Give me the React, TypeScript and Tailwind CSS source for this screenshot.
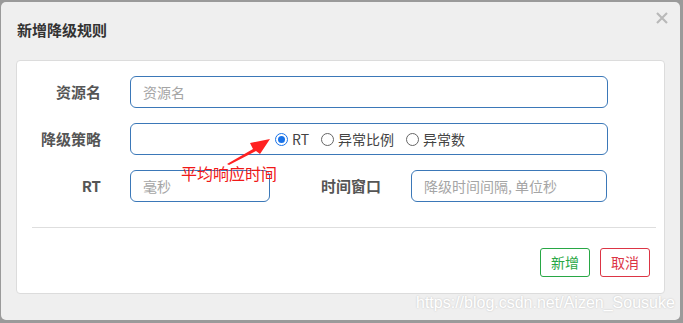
const FONT = "font-['Microsoft_YaHei','Noto_Sans_CJK_SC',sans-serif]";

function Field({ placeholder, className }: { placeholder: string; className: string }) {
  return (
    <div
      className={`h-[32px] rounded-[6px] border border-[#3b78b8] bg-white pl-[12px] flex items-center text-[14px] text-[#a5a5a5] ${className}`}
    >
      {placeholder}
    </div>
  );
}

function Radio({ checked, label }: { checked?: boolean; label: string }) {
  return (
    <label className="flex items-center gap-[4px] text-[14px] text-[#444]">
      <span
        className={`w-[13px] h-[13px] rounded-full border flex items-center justify-center bg-white ${
          checked ? "border-[#1a73e8]" : "border-[#666]"
        }`}
      >
        {checked && <span className="w-[7px] h-[7px] rounded-full bg-[#1a73e8]" />}
      </span>
      {label}
    </label>
  );
}

export default function App() {
  return (
    <div className={`w-[683px] h-[323px] bg-[#9a9a9a] pt-[2px] pl-[1px] pr-[3px] pb-[3px] ${FONT}`}>
      <div className="relative h-[318px] rounded-[5px] bg-[#efefef]">
        <div className="flex items-start justify-between h-[58px] pl-[16px] pr-[12px]">
          <h2 className="mt-[17px] text-[15px] font-bold text-[#333]">新增降级规则</h2>
          <svg width="12" height="12" viewBox="0 0 12 12" className="mt-[10px]">
            <path d="M1 1 L11 11 M11 1 L1 11" stroke="#b9b9b9" strokeWidth="2.2" />
          </svg>
        </div>

        <div className="mx-[15px] h-[234px] rounded-[4px] border border-[#dcdcdc] bg-white pt-[15px]">
          <div className="flex flex-col gap-[15px]">
            <div className="flex items-center">
              <div className="w-[84px] text-right text-[15px] font-bold text-[#555]">资源名</div>
              <Field placeholder="资源名" className="ml-[29px] w-[478px]" />
            </div>
            <div className="flex items-center">
              <div className="w-[84px] text-right text-[15px] font-bold text-[#555]">降级策略</div>
              <div className="relative ml-[29px] w-[478px] h-[32px] rounded-[6px] border border-[#3b78b8] flex items-center justify-center gap-[12px] pl-[2px]">
                <Radio checked label="RT" />
                <Radio label="异常比例" />
                <Radio label="异常数" />
                <svg width="50" height="28" viewBox="0 0 50 28" className="absolute left-[95px] top-[13px]">
                  <polygon points="1,27 27,12 24,6 44,2 34,17 30,14 3,28" fill="#f22" />
                </svg>
                <span className="absolute left-[50px] top-[37px] text-[16px] text-[#f01818] whitespace-nowrap">
                  平均响应时间
                </span>
              </div>
            </div>
            <div className="flex items-center">
              <div className="w-[84px] text-right text-[15px] font-bold text-[#555]">RT</div>
              <Field placeholder="毫秒" className="ml-[29px] w-[140px]" />
              <div className="ml-[51px] text-[15px] font-bold text-[#555]">时间窗口</div>
              <Field placeholder="降级时间间隔, 单位秒" className="ml-[30px] w-[196px]" />
            </div>
          </div>

          <div className="mt-[25px] ml-[15px] mr-[8px] h-px bg-[#dedede]" />

          <div className="flex justify-end gap-[10px] mt-[20px] pr-[14px]">
            <button className="w-[50px] h-[29px] rounded-[3px] border border-[#28a745] text-[14px] text-[#28a745]">
              新增
            </button>
            <button className="w-[50px] h-[29px] rounded-[3px] border border-[#dc3545] text-[14px] text-[#dc3545]">
              取消
            </button>
          </div>
        </div>

        <span className="absolute left-[415px] top-[289px] font-['Liberation_Sans',Arial,sans-serif] text-[16px] text-white [text-shadow:0_0_2px_rgba(0,0,0,0.2)] whitespace-nowrap">
          https://blog.csdn.net/Aizen_Sousuke
        </span>
      </div>
    </div>
  );
}
